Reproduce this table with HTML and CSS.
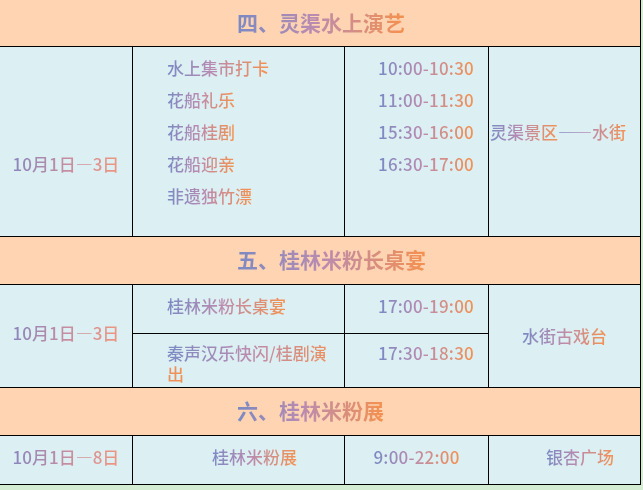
FILE: index.html
```html
<!DOCTYPE html>
<html lang="zh">
<head>
<meta charset="utf-8">
<title>活动安排</title>
<link rel="stylesheet" href="styles.css">
</head>
<body>
<div class="sched">
  <div class="sec-head"><span class="g">四、灵渠水上演艺</span></div>
  <div class="cell date d4"><span class="g gd">10月1日—3日</span></div>
  <div class="cell list items4">
    <span class="g">水上集市打卡</span>
    <span class="g">花船礼乐</span>
    <span class="g">花船桂剧</span>
    <span class="g">花船迎亲</span>
    <span class="g">非遗独竹漂</span>
  </div>
  <div class="cell list times4">
    <span class="g num">10:00-10:30</span>
    <span class="g num">11:00-11:30</span>
    <span class="g num">15:30-16:00</span>
    <span class="g num">16:30-17:00</span>
  </div>
  <div class="cell place4"><span class="g">灵渠景区</span><span class="g">——水街</span></div>

  <div class="sec-head"><span class="g">五、桂林米粉长桌宴</span></div>
  <div class="cell date span2 center-v"><span class="g gd">10月1日—3日</span></div>
  <div class="cell item5a"><span class="g">桂林米粉长桌宴</span></div>
  <div class="cell time5a"><span class="g num">17:00-19:00</span></div>
  <div class="cell place5 span2 center-v"><span class="g">水街古戏台</span></div>
  <div class="cell item5b"><span class="g wrap">秦声汉乐快闪/桂剧演出</span></div>
  <div class="cell time5b"><span class="g num">17:30-18:30</span></div>

  <div class="sec-head"><span class="g">六、桂林米粉展</span></div>
  <div class="cell date center-v"><span class="g gd">10月1日—8日</span></div>
  <div class="cell item6 center-v"><span class="g">桂林米粉展</span></div>
  <div class="cell time6 center-v"><span class="g num">9:00-22:00</span></div>
  <div class="cell place6 center-v"><span class="g">银杏广场</span></div>
</div>
</body>
</html>
```
FILE: styles.css
```css
html, body {
  margin: 0;
  padding: 0;
  background: #d4ecd2;
}
body {
  font-family: "Noto Sans CJK SC", "Noto Sans", sans-serif;
  font-size: 17px;
  font-weight: 500;
}
.sched {
  display: grid;
  grid-template-columns: 132px 211px 143px 151px;
  grid-template-rows: 46px 189px 47px 48px 53px 47px 48px;
  gap: 1px;
  width: 640px;
  background: #000;
  border-right: 1px solid #000;
  border-bottom: 1px solid #000;
}
.sec-head {
  grid-column: 1 / -1;
  background: #fed4b2;
  display: flex;
  align-items: center;
  padding-left: 237px;
  padding-bottom: 3px;
  font-size: 21px;
  font-weight: 700;
}
.cell {
  background: #dcf0f3;
  line-height: 32px;
}
.g {
  display: inline-block;
  background: linear-gradient(90deg, #7a89c4 0%, #b98bb0 45%, #f5914f 100%);
  -webkit-background-clip: text;
  background-clip: text;
  color: transparent;
}
.gd {
  background: linear-gradient(90deg, #8b86bd 0%, #d08e9c 60%, #ee9580 100%);
  -webkit-background-clip: text;
  background-clip: text;
}
.num {
  letter-spacing: 0.2px;
}
.list {
  display: flex;
  flex-direction: column;
  align-items: flex-start;
  padding-top: 5px;
}
.items4 { padding-left: 34px; }
.times4 { padding-left: 33px; }
.date {
  text-align: center;
}
.d4 { padding-top: 101px; }
.place4 {
  padding-top: 69px;
  padding-left: 1px;
}
.span2 { grid-row: span 2; }
.center-v {
  display: flex;
  align-items: center;
}
.date.center-v { justify-content: center; }
.item5a, .time5a { line-height: 21px; padding-top: 10px; }
.item5a { padding-left: 34px; }
.time5a { padding-left: 33px; }
.item5b { line-height: 21px; padding: 8px 8px 0 34px; }
.item5b .g { display: inline; }
.time5b { line-height: 21px; padding-top: 8px; padding-left: 33px; }
.place5 { justify-content: center; }
.item6 { padding-left: 79px; }
.time6 { justify-content: center; }
.place6 { padding-left: 57px; }
.item6, .time6, .place6, .date.center-v { padding-bottom: 6px; }
```
